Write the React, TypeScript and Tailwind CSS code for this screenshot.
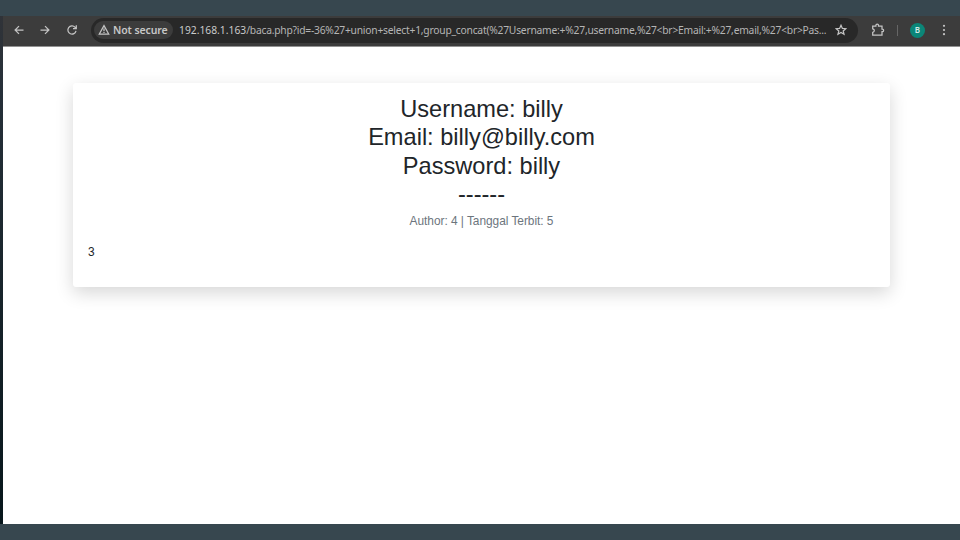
import React from "react";

const strokeProps = { fill: "none", stroke: "#c4c4c4", strokeWidth: 1.25 };

function Toolbar() {
  return (
    <header className="flex h-[31px] shrink-0 items-center border-b border-[#929292] bg-[#3c3c3c] pb-[2px] font-['Noto_Sans',sans-serif] text-[#c7c7c7]">
      <nav className="flex w-[88px] shrink-0 items-center pl-[10px]">
        <svg className="mr-[14px] h-3 w-3 shrink-0" viewBox="0 0 12 12" {...strokeProps}>
          <path d="M10.5 6H2.2M6 2.1 2.1 6 6 9.9" />
        </svg>
        <svg className="mr-[15px] h-3 w-3 shrink-0" viewBox="0 0 12 12" {...strokeProps}>
          <path d="M1.5 6h8.3M6 2.1 9.9 6 6 9.9" />
        </svg>
        <svg className="h-3 w-3 shrink-0" viewBox="0 0 12 12" {...strokeProps}>
          <path d="M10 6.8a4.1 4.1 0 1 1-1-3.6l1 1M10.3 1.3v3.3H7" />
        </svg>
      </nav>

      <div className="flex h-[25px] w-[767px] shrink-0 items-center rounded-full bg-[#282828] pl-[3px]">
        <div className="flex h-[18px] w-[79px] shrink-0 items-center rounded-full bg-[#3c3c3c] pl-[4px]">
          <svg className="mr-[3px] h-3 w-3 shrink-0" viewBox="0 0 12 12" {...strokeProps}>
            <path d="M6 1.6 1.3 10h9.4zM6 4.4v2.9M6 8v1.1" />
          </svg>
          <span className="whitespace-nowrap text-[10.5px] leading-none font-semibold tracking-[-0.1px]">Not secure</span>
        </div>
        <span className="ml-[6px] w-[656px] shrink-0 whitespace-nowrap text-[10.3px] leading-none text-[#b5b5b5]">
          <span className="text-[#cacaca]">192.168.1.163</span>
          <span className="tracking-[-0.235px]">
            {"/baca.php?id=-36%27+union+select+1,group_concat(%27Username:+%27,username,%27<br>Email:+%27,email,%27<br>Pas..."}
          </span>
        </span>
        <svg className="h-3 w-3 shrink-0" viewBox="0 0 12 12" {...strokeProps}>
          <path d="m6 1.3 1.4 3.1 3.4.3-2.6 2.2.8 3.3L6 8.4l-3 1.8.8-3.3-2.6-2.2 3.4-.3z" />
        </svg>
      </div>

      <svg className="ml-[13px] h-[14px] w-[14px] shrink-0" viewBox="0 0 14 14" {...strokeProps}>
        <path d="M1.7 3h3.2V2.3a1.3 1.3 0 0 1 2.6 0V3h3.5v3.1h.3a1.3 1.3 0 0 1 0 2.6H11v3.5H1.7V9.4c2.2-.4 2.2-3.2 0-3.6z" />
      </svg>
      <div className="ml-[12px] h-[11px] w-px shrink-0 bg-[#666]" />
      <div className="ml-[12px] flex h-[15px] w-[15px] shrink-0 items-center justify-center rounded-full bg-[#0b8678] text-[8px] leading-none font-semibold text-[#d5e9e6]">
        B
      </div>
      <svg className="ml-[13px] h-3 w-[12px] shrink-0" viewBox="0 0 12 12" fill="#c4c4c4">
        <circle cx="6" cy="1.8" r="1.1" />
        <circle cx="6" cy="6" r="1.1" />
        <circle cx="6" cy="10.2" r="1.1" />
      </svg>
    </header>
  );
}

export default function App() {
  return (
    <div className="flex h-[540px] w-[960px] flex-col overflow-hidden bg-[#37474f] pt-4 pb-4">
      <div className="flex min-h-0 flex-1">
        <div className="w-[3px] shrink-0 bg-linear-to-b from-[#303338] via-[#263039] via-15% to-[#07161b]" />
        <div className="flex min-w-0 flex-1 flex-col bg-white">
          <Toolbar />
          <main className="pt-[36px] pl-[70px] font-['Liberation_Sans',sans-serif] text-[#212529]">
            <article className="h-[204px] w-[817px] rounded-[3px] bg-white px-[15px] pt-[11.8px] shadow-[0_6px_18px_rgba(0,0,0,0.16)]">
              <h2 className="text-center text-[23.6px] leading-[28.4px]">
                Username: billy
                <br />
                Email: billy@billy.com
                <br />
                Password: billy
                <br />
                ------
              </h2>
              <p className="mt-[3.5px] text-center text-[11.9px] leading-[18px] tracking-[-0.03px] text-[#6c757d]">
                Author: 4 | Tanggal Terbit: 5
              </p>
              <p className="mt-[13px] text-[11.9px] leading-[18px]">3</p>
            </article>
          </main>
        </div>
      </div>
    </div>
  );
}
